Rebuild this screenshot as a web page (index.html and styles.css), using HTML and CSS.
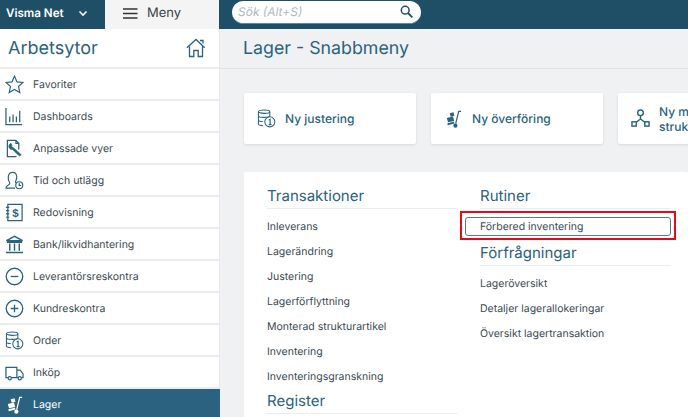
FILE: index.html
```html
<!DOCTYPE html>
<html lang="sv">
<head>
  <meta charset="UTF-8">
  <meta name="viewport" content="width=device-width, initial-scale=1.0">
  <title>Visma Net - Lager</title>
  <link rel="stylesheet" href="styles.css">
</head>
<body>
  <header class="topbar">
    <div class="brand">
      <span>Visma Net</span>
      <svg class="chevron" width="10" height="7" viewBox="0 0 10 7"><path d="M1.500 1.500 5 5l3.500-3.500" fill="none" stroke="#fff" stroke-width="1.600"/></svg>
    </div>
    <div class="menu-btn">
      <svg width="15" height="11" viewBox="0 0 15 11"><path d="M0 1h14.500M0 5.500h14.500M0 10h14.500" stroke="#333" stroke-width="1.300"/></svg>
      <span>Meny</span>
    </div>
    <div class="search">
      <span>Sök (Alt+S)</span>
      <svg width="13" height="13" viewBox="0 0 13 13"><circle cx="5.200" cy="5.200" r="3.900" fill="none" stroke="#1f4f66" stroke-width="1.500"/><path d="m8 8 4.300 4.300" stroke="#1f4f66" stroke-width="1.800"/></svg>
    </div>
  </header>

  <div class="layout">
    <nav class="sidebar">
      <div class="side-head">
        <h1>Arbetsytor</h1>
        <svg width="20" height="20" viewBox="0 0 20 20" fill="none" stroke="#2a6280" stroke-width="1.300"><path d="M.8 9.800 10 1.500l8.700 8.300M3.500 8.500V18.500h4.300V12.500h4.400V18.500h4.300V8.500M14 2.500h3v3"/></svg>
      </div>
      <a class="side-item">
        <svg class="side-icon" viewBox="0 0 20 20" fill="none" stroke="#2a6280" stroke-width="1.200"><path d="m10 1.200 2.600 6 6.400.6-4.800 4.300 1.400 6.400L10 15.200l-5.600 3.300 1.400-6.400L1 7.800l6.400-.6z"/></svg>
        Favoriter
      </a>
      <a class="side-item">
        <svg class="side-icon" viewBox="0 0 20 20" fill="none" stroke="#2a6280" stroke-width="1.300"><path d="M1 1v17.500h17M5 16V10M8.500 16V8M12 16V10M15.500 16V4"/></svg>
        Dashboards
      </a>
      <a class="side-item">
        <svg class="side-icon" viewBox="0 0 20 20" fill="none" stroke="#2a6280" stroke-width="1.300"><path d="M14.500 11V4.500L11.500 1.500H2.500V18.500H12M11.500 1.500v3h3"/><path d="m4.500 6 1.500-1.500 1.500 2-1 1 2.500 2 3 2.500 5 4.500-1.500 1.500-5-4.500-3-3-1.500.5-2-2.500z" fill="#2a6280" stroke-width=".8"/></svg>
        Anpassade vyer
      </a>
      <a class="side-item">
        <svg class="side-icon" viewBox="0 0 20 20" fill="none" stroke="#2a6280" stroke-width="1.200"><path d="M5 12.500C3.500 10.500 3 8.500 3.500 5.500 4 3 6 1.500 8 1.500s4 1.500 4.300 4c.2 1.500 0 3-.8 4.500-.5 1-.8 2-.3 2.500M5 12.500c.3 1-.5 1.700-1.500 2.300-1.300.7-2.400 1.300-2.500 3.200h9.500"/><circle cx="15" cy="15" r="3.700"/><path d="M15 13v2.300h2"/></svg>
        Tid och utlägg
      </a>
      <a class="side-item">
        <svg class="side-icon" viewBox="0 0 20 20" fill="none" stroke="#2a6280" stroke-width="1.300"><path d="M3 1.500h15v17H3zM1 4.500h3.500M1 8h3.500M1 11.500h3.500M1 15h3.500"/><text class="icon-dollar" x="11" y="14.500" text-anchor="middle">$</text></svg>
        Redovisning
      </a>
      <a class="side-item">
        <svg class="side-icon" viewBox="0 0 20 20" fill="none" stroke="#2a6280" stroke-width="1.500"><path d="M1.500 6 10 1.500 18.500 6zM2 7.700h16M5 9v7.500M10 9v7.500M15 9v7.500M1 18.500h18" /></svg>
        Bank/likvidhantering
      </a>
      <a class="side-item">
        <svg class="side-icon" viewBox="0 0 20 20" fill="none" stroke="#2a6280" stroke-width="1.400"><circle cx="10" cy="10" r="8.700"/><path d="M6 10h8"/></svg>
        Leverantörsreskontra
      </a>
      <a class="side-item">
        <svg class="side-icon" viewBox="0 0 20 20" fill="none" stroke="#2a6280" stroke-width="1.400"><circle cx="10" cy="10" r="8.700"/><path d="M6 10h8M10 6v8"/></svg>
        Kundreskontra
      </a>
      <a class="side-item">
        <svg class="side-icon" viewBox="0 0 20 20" fill="none" stroke="#2a6280" stroke-width="1.100"><ellipse cx="7.500" cy="2.800" rx="6" ry="1.800"/><path d="M1.500 2.800v13c0 1 2 1.700 5 1.800M1.500 7c0 1 2 1.800 6 1.800s6-.8 6-1.800V3M1.500 11.500c0 1 2 1.600 4.500 1.700"/><circle cx="13.500" cy="13.500" r="5.300"/><path d="M12.300 11.700l1.500-.8v5.500M12.300 16.400h3" stroke-width="1.200"/></svg>
        Order
      </a>
      <a class="side-item">
        <svg class="side-icon" viewBox="0 0 20 20" fill="none" stroke="#2a6280" stroke-width="1.300"><path d="M3 15.500H1V4.500h11.500v11H7M12.500 7.500h3.500l3 4v4h-1.500M12.500 15.500h1"/><circle cx="5" cy="16" r="1.700"/><circle cx="15.500" cy="16" r="1.700"/></svg>
        Inköp
      </a>
      <a class="side-item active">
        <svg class="side-icon" viewBox="0 0 20 20" fill="#fff" stroke="none"><path d="M3 9.500 9.500 8l1.200 4.500-6.500 1.500zM6 4.500l4-1 1 3.700-4 1zM3.500 15l7-1.700.5 2-7 1.700z"/><circle cx="12" cy="17.500" r="2.200"/><path d="M12.300 15.500 15.500 2.500H18" fill="none" stroke="#fff" stroke-width="1.300"/></svg>
        Lager
      </a>
    </nav>

    <main class="content">
      <div class="page-head">
        <h2>Lager - Snabbmeny</h2>
      </div>

      <div class="shortcuts">
        <a class="shortcut">
          <svg class="shortcut-icon" viewBox="0 0 20 20" fill="none" stroke="#2a6280" stroke-width="1.100"><ellipse cx="7.500" cy="2.800" rx="6" ry="1.800"/><path d="M1.500 2.800v13c0 1 2 1.700 5 1.800M1.500 7c0 1 2 1.800 6 1.800s6-.8 6-1.800V3M1.500 11.500c0 1 2 1.600 4.500 1.700"/><circle cx="13.500" cy="13.500" r="5.300"/><path d="M12.300 11.700l1.500-.8v5.500M12.300 16.400h3" stroke-width="1.200"/></svg>
          <span>Ny justering</span>
        </a>
        <a class="shortcut">
          <svg class="shortcut-icon" viewBox="0 0 20 20" fill="#2a6280" stroke="none"><path d="M3 9.500 9.500 8l1.200 4.500-6.500 1.500zM6 4.500l4-1 1 3.700-4 1zM3.500 15l7-1.700.5 2-7 1.700z"/><circle cx="12" cy="17.500" r="2.200"/><path d="M12.300 15.500 15.500 2.500H18" fill="none" stroke="#2a6280" stroke-width="1.300"/></svg>
          <span>Ny överföring</span>
        </a>
        <a class="shortcut">
          <svg class="shortcut-icon" viewBox="0 0 20 20" fill="none" stroke="#2a6280" stroke-width="1.500"><circle cx="10" cy="4" r="3"/><path d="M10 7v3.500L5.500 14M10 10.500l4.500 3.500"/><rect x="1" y="13.500" width="4.500" height="4.500"/><rect x="14.500" y="13.500" width="4.500" height="4.500"/></svg>
          <span class="wrap">Ny monterad strukturartikel</span>
        </a>
      </div>

      <section class="panel">
        <div class="col col-left">
          <h3>Transaktioner</h3>
          <a class="link">Inleverans</a>
          <a class="link">Lagerändring</a>
          <a class="link">Justering</a>
          <a class="link">Lagerförflyttning</a>
          <a class="link">Monterad strukturartikel</a>
          <a class="link">Inventering</a>
          <a class="link">Inventeringsgranskning</a>
          <h3>Register</h3>
        </div>
        <div class="col col-right">
          <h3>Rutiner</h3>
          <a class="link focused"><span class="focused-text">Förbered inventering</span></a>
          <h3 class="after-focus">Förfrågningar</h3>
          <a class="link">Lageröversikt</a>
          <a class="link">Detaljer lagerallokeringar</a>
          <a class="link">Översikt lagertransaktion</a>
        </div>
      </section>
    </main>
  </div>
</body>
</html>
```

FILE: styles.css
```css
* {
  box-sizing: border-box;
  margin: 0;
  padding: 0;
}
html, body {
  height: 100%;
  overflow: hidden;
}
body {
  font-family: Inter, "Noto Sans", sans-serif;
  background-color: #f0f1f3;
  color: #3c4a54;
  text-rendering: geometricPrecision;
}
.topbar {
  display: flex;
  height: 29px;
  background-color: #1f4f66;
}
.brand {
  width: 105px;
  display: flex;
  align-items: center;
  justify-content: space-between;
  padding: 0 17px 3px 6px;
  color: #fff;
  font-size: 11.600px;
  font-weight: 600;
}
.menu-btn {
  width: 114px;
  display: flex;
  align-items: center;
  gap: 9px;
  padding: 0 0 3px 18px;
  background-color: #f4f4f4;
  color: #3a3f44;
  font-size: 13px;
}
.search {
  width: 189px;
  height: 23px;
  margin: 1px 0 0 13px;
  display: flex;
  align-items: center;
  justify-content: space-between;
  padding: 0 8px 2px 6px;
  background: white;
  border-radius: 12px;
  border-bottom: 1px solid #4d8fb8;
  color: #b4b8bb;
  font-size: 12px;
  font-style: italic;
}
.layout {
  display: flex;
  height: 388px;
}
.sidebar {
  width: 220px;
  flex-shrink: 0;
  background: white;
  border-right: 1px solid #e6e7e9;
}
.side-head {
  height: 40px;
  display: flex;
  align-items: center;
  justify-content: space-between;
  padding: 0 13px 0 8px;
  border-bottom: 2px solid #ececee;
}
.side-head h1 {
  font-size: 18px;
  font-weight: 400;
  color: #2a6280;
}
.side-item {
  height: 32px;
  display: flex;
  align-items: center;
  gap: 9px;
  padding: 1px 0 0 5px;
  border-bottom: 2px solid #ececee;
  font-size: 10.500px;
}
.side-icon {
  width: 19px;
  height: 19px;
  flex-shrink: 0;
}
.icon-dollar {
  font-family: "Liberation Sans", sans-serif;
  font-size: 12px;
  font-weight: 700;
  fill: #2a6280;
  stroke: none;
}
.side-item.active {
  height: 28px;
  margin-right: -1px;
  padding-top: 2px;
  background-color: #2a6280;
  color: #fff;
  border-bottom: none;
}
.content {
  flex: 1;
  min-width: 0;
}
.page-head {
  height: 40px;
  padding: 8px 0 0 23px;
  border-bottom: 1px solid #e2e3e5;
}
.page-head h2 {
  font-size: 17.800px;
  line-height: 24px;
  font-weight: 400;
  color: #2a6280;
}
.shortcuts {
  display: flex;
  gap: 15px;
  padding: 24px 0 0 24px;
}
.shortcut {
  width: 172px;
  height: 51px;
  flex-shrink: 0;
  display: flex;
  align-items: center;
  gap: 9px;
  padding-left: 13px;
  background: white;
  border-radius: 2px;
  box-shadow: 0 1px 3px rgba(0,0,0,0.1);
  color: #2a6280;
  font-size: 12px;
  font-weight: 500;
  line-height: 15px;
}
.shortcut-icon {
  width: 19px;
  height: 19px;
  flex-shrink: 0;
}
.wrap {
  width: 80px;
}
.panel {
  display: flex;
  margin: 28px 0 0 24px;
  height: 260px;
  padding-left: 23px;
  background: white;
  border-radius: 2px;
}
.col h3 {
  height: 25px;
  font-size: 15px;
  line-height: 24px;
  font-weight: 400;
  color: #2a6280;
  border-bottom: 1px solid #ececee;
}
.col-left {
  width: 190px;
  padding-top: 12px;
}
.col-left h3:first-child {
  margin-bottom: 5px;
}
.col-right {
  width: 191px;
  margin-left: 23px;
  padding-top: 12px;
}
.link {
  display: block;
  height: 25px;
  padding-top: 5px;
  font-size: 10.500px;
  line-height: 16px;
}
.focused {
  position: relative;
  height: 19px;
  margin: 8px 0 5px -15px;
  padding: 1px 0 0 14px;
  border: 1px solid #5b7a8c;
  border-radius: 3px;
}
/* red marker drawn over the screenshot */
.focused::after {
  content: "";
  position: absolute;
  top: -7px;
  left: -6px;
  right: -6px;
  bottom: -5px;
  border: 2px solid #e30b17;
}
.after-focus {
  margin-bottom: 5px;
}
```
